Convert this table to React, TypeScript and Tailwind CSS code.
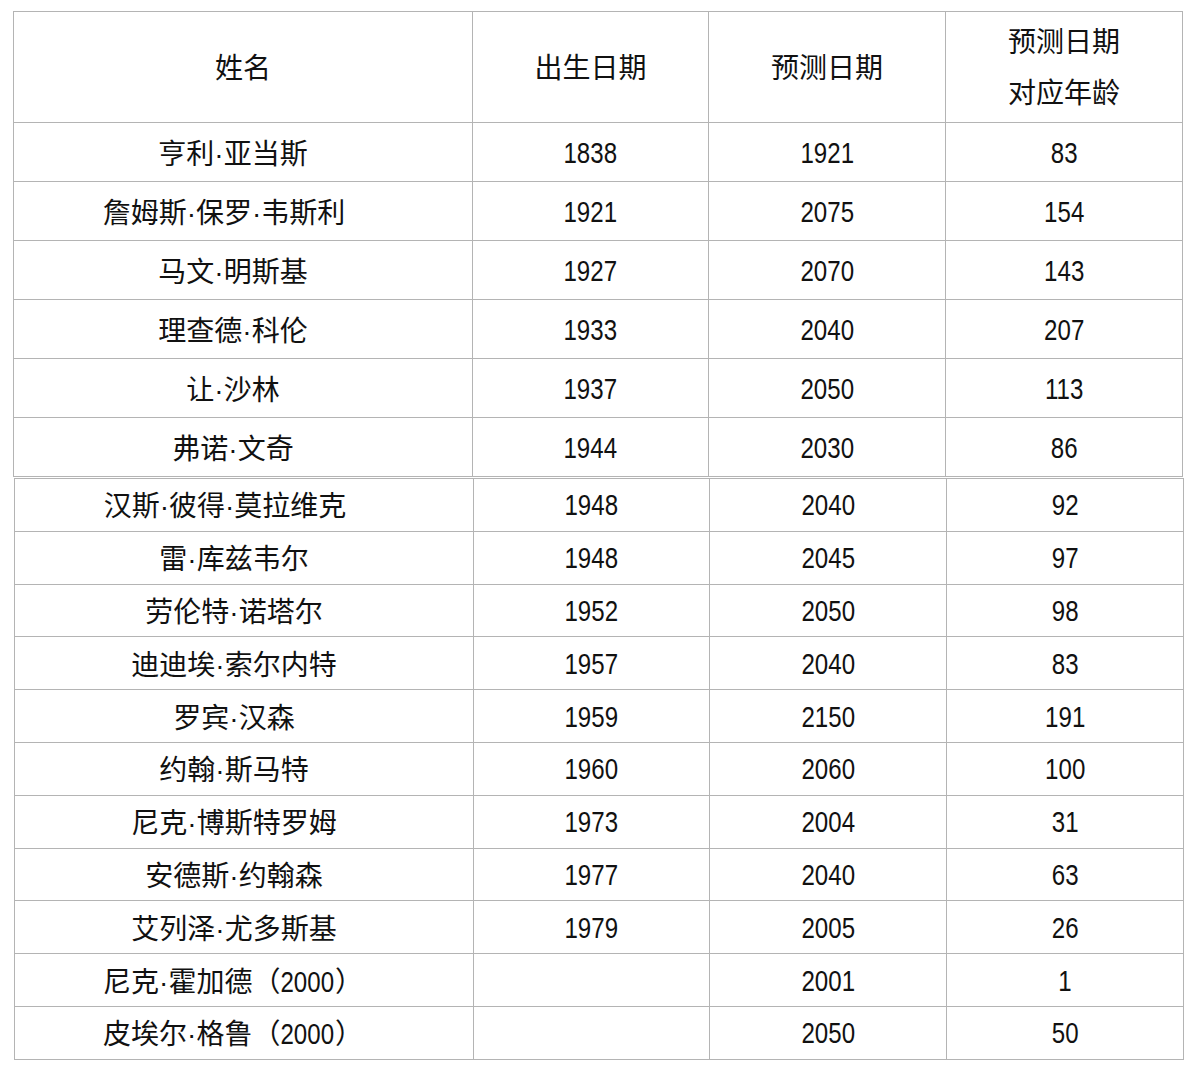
import React from "react";

type R = [string, string, string, string, number];

const upper: R[] = [
  ["亨利·亚当斯", "1838", "1921", "83", 1],
  ["詹姆斯·保罗·韦斯利", "1921", "2075", "154", 2],
  ["马文·明斯基", "1927", "2070", "143", 1],
  ["理查德·科伦", "1933", "2040", "207", 1],
  ["让·沙林", "1937", "2050", "113", 1],
  ["弗诺·文奇", "1944", "2030", "86", 1],
];

const lower: R[] = [
  ["汉斯·彼得·莫拉维克", "1948", "2040", "92", 2],
  ["雷·库兹韦尔", "1948", "2045", "97", 1],
  ["劳伦特·诺塔尔", "1952", "2050", "98", 1],
  ["迪迪埃·索尔内特", "1957", "2040", "83", 1],
  ["罗宾·汉森", "1959", "2150", "191", 1],
  ["约翰·斯马特", "1960", "2060", "100", 1],
  ["尼克·博斯特罗姆", "1973", "2004", "31", 1],
  ["安德斯·约翰森", "1977", "2040", "63", 1],
  ["艾列泽·尤多斯基", "1979", "2005", "26", 1],
  ["尼克·霍加德（2000）", "", "2001", "1", 3],
  ["皮埃尔·格鲁（2000）", "", "2050", "50", 3],
];

const font = {
  fontFamily: '"Liberation Sans", "Noto Sans CJK SC", sans-serif',
};

function Num({ v }: { v: string }) {
  if (!v) return null;
  return (
    <span className="inline-block text-[29px] leading-none scale-x-[0.83]">{v}</span>
  );
}

function Name({ v }: { v: string }) {
  const parts = v.split(/(\d+)/);
  return (
    <span className="whitespace-nowrap">
      {parts.map((p, i) =>
        /^\d+$/.test(p) ? (
          <span key={i} className="inline-block text-[29px] leading-none scale-x-[0.83] mx-[-5px]">
            {p}
          </span>
        ) : (
          <span key={i}>{p}</span>
        )
      )}
    </span>
  );
}

function Row({ r, h }: { r: R; h: string }) {
  const pad = r[4] === 2 ? "pr-[38px]" : r[4] === 3 ? "pr-[22px]" : "pr-[20px]";
  return (
    <>
      <div className={`bg-white flex items-center justify-center pt-[5px] ${pad} ${h}`}>
        <Name v={r[0]} />
      </div>
      <div className={`bg-white flex items-center justify-center pt-[2px] ${h}`}>
        <Num v={r[1]} />
      </div>
      <div className={`bg-white flex items-center justify-center pt-[2px] ${h}`}>
        <Num v={r[2]} />
      </div>
      <div className={`bg-white flex items-center justify-center pt-[2px] ${h}`}>
        <Num v={r[3]} />
      </div>
    </>
  );
}

export default function App() {
  return (
    <div className="w-[1200px] h-[1072px] bg-white text-[28px] text-[#111]" style={font}>
      <div className="pt-[11px]">
        <div className="ml-[13px] w-[1170px] grid grid-cols-[458px_235px_236px_236px] gap-px p-px bg-[#b4b4b4]">
          <div className="bg-white h-[110px] flex items-center justify-center pt-[3px]">姓名</div>
          <div className="bg-white h-[110px] flex items-center justify-center pt-[3px]">出生日期</div>
          <div className="bg-white h-[110px] flex items-center justify-center pt-[3px]">预测日期</div>
          <div className="bg-white h-[110px] flex flex-col items-center justify-center leading-[51px] pt-[2px]">
            <span>预测日期</span>
            <span>对应年龄</span>
          </div>
          {upper.map((r, i) => (
            <Row key={i} r={r} h="h-[58px]" />
          ))}
        </div>
        <div className="ml-[14px] mt-px w-[1170px] grid grid-cols-[458px_235px_236px_236px] gap-px p-px bg-[#b4b4b4]">
          {lower.map((r, i) => (
            <Row key={i} r={r} h="h-[51.8px]" />
          ))}
        </div>
      </div>
    </div>
  );
}
